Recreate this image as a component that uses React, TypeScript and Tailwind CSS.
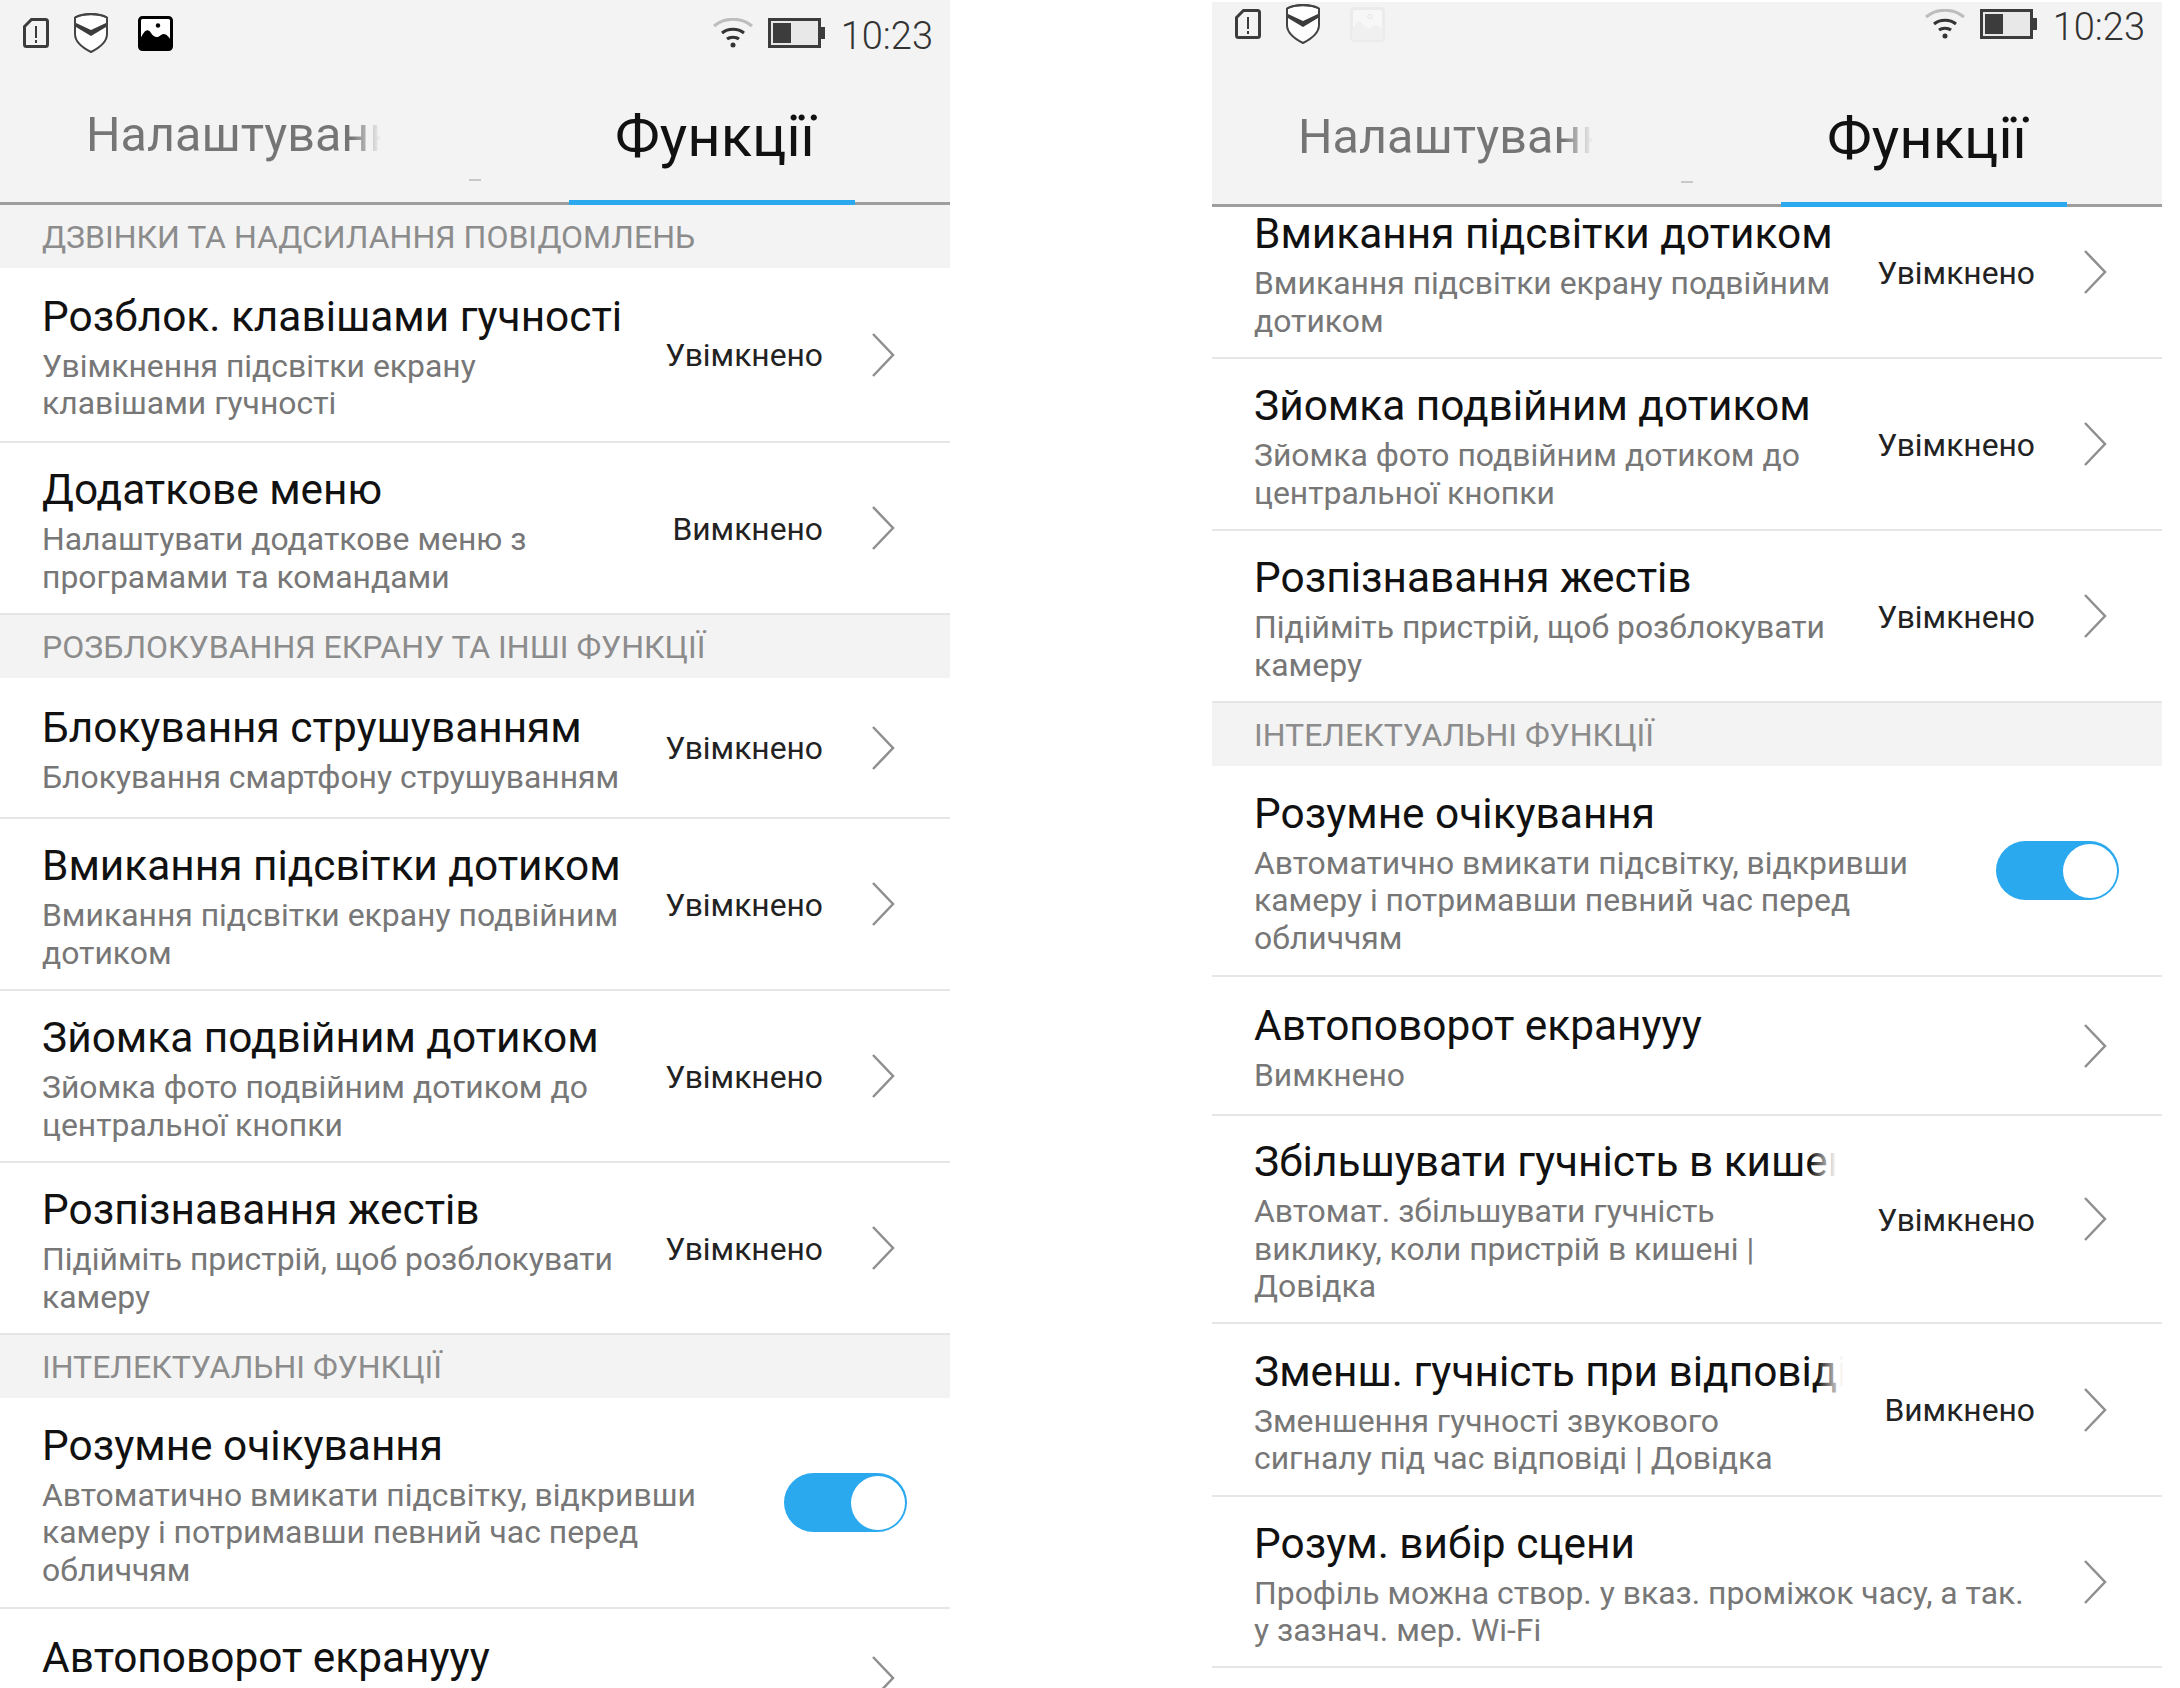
const FONT = "font-['Roboto',sans-serif]";

type Row = { title: string; sub: string[]; value?: string; toggle?: boolean; fade?: boolean; h: string };

function Shield() {
  return (
    <svg width="36" height="42" viewBox="0 0 36 42" fill="none">
      <path d="M18 2C24 2 30 3.2 34 5.5V22C34 30 26 36 18 40C10 36 2 30 2 22V5.5C6 3.2 12 2 18 2Z" fill="#fff" stroke="#444" strokeWidth="2" />
      <path d="M2 4.5C6 2.2 12 1 18 1C24 1 30 2.2 34 4.5V6.5C30 4.2 24 3.2 18 3.2C12 3.2 6 4.2 2 6.5Z" fill="#444" />
      <path d="M3 11L18 18L33 11V15L18 24L3 15Z" fill="#3c3c3c" />
    </svg>
  );
}

function Alert() {
  return (
    <svg width="26" height="30" viewBox="0 0 26 30" fill="none">
      <path d="M8.5 1.5H22.5C23.6 1.5 24.5 2.4 24.5 3.5V26.5C24.5 27.6 23.6 28.5 22.5 28.5H3.5C2.4 28.5 1.5 27.6 1.5 26.5V8.5Z" stroke="#3c3c3c" strokeWidth="3" />
      <path d="M13 8V20M13 22V25" stroke="#3c3c3c" strokeWidth="2" />
    </svg>
  );
}

function Picture({ faded }: { faded?: boolean }) {
  const line = faded ? '#ebebeb' : '#000';
  const land = faded ? '#f0f0f0' : '#000';
  return (
    <svg width="35" height="35" viewBox="0 0 35 35" fill="none">
      <rect x="1.5" y="1.5" width="32" height="32" rx="3" fill={faded ? '#f7f7f7' : '#fff'} stroke={line} strokeWidth="3" />
      <path d="M2 24C6 14 10 12 13 17C16 22 20 22 23 19C27 16 30 20 33 24V33H2Z" fill={land} />
      <circle cx="20" cy="9.5" r="2.2" fill={faded ? 'none' : '#000'} stroke={faded ? '#e4e4e4' : 'none'} />
    </svg>
  );
}

function Wifi() {
  return (
    <svg width="40" height="30" viewBox="0 0 40 30" fill="none">
      <path d="M1 8C12 -1 28 -1 39 8" stroke="#bdbdbd" strokeWidth="3" />
      <path d="M9 15C15 10 25 10 31 15" stroke="#333" strokeWidth="3" />
      <path d="M14 21C17 18.5 23 18.5 26 21" stroke="#333" strokeWidth="3" />
      <circle cx="20" cy="27" r="2.5" fill="#333" />
    </svg>
  );
}

function Battery() {
  return (
    <svg width="57" height="30" viewBox="0 0 57 30" fill="none">
      <rect x="1.5" y="1.5" width="50" height="27" stroke="#3c3c3c" strokeWidth="3" fill="#e8e8e8" />
      <rect x="5" y="5" width="18" height="20" fill="#3c3c3c" />
      <rect x="53" y="9" width="4" height="12" fill="#3c3c3c" />
    </svg>
  );
}

function Chevron() {
  return (
    <svg width="24" height="46" viewBox="0 0 24 46" fill="none">
      <path d="M2 2L22 23L2 44" stroke="#8f8f8f" strokeWidth="2.5" />
    </svg>
  );
}

function Toggle() {
  return (
    <div className="flex h-[59px] w-[123px] items-center justify-end rounded-full bg-[#2ba9ee] pr-[2px]">
      <div className="h-[54px] w-[54px] rounded-full bg-white" />
    </div>
  );
}

function Section({ label }: { label: string }) {
  return (
    <div className="flex h-[63px] shrink-0 items-center bg-[#f3f3f3] pl-[42px] text-[32px] text-[#8c8c8c]">
      {label}
    </div>
  );
}

function SettingRow({ row }: { row: Row }) {
  return (
    <div className={`flex shrink-0 items-center border-b-2 border-[#e6e6e6] bg-white pl-[42px] ${row.h}`}>
      <div className="relative min-w-0 flex-1 overflow-hidden pt-[4px]">
        <div className="mb-[5px] whitespace-nowrap text-[42.4px] leading-[52px] text-[#111]">{row.title}</div>
        {row.fade && <div className="absolute right-0 top-0 h-[56px] w-[26px] bg-gradient-to-r from-transparent to-white" />}
        {row.sub.map((s) => (
          <div key={s} className="whitespace-nowrap text-[31.9px] leading-[37.5px] text-[#777]">{s}</div>
        ))}
      </div>
      {row.toggle ? (
        <div className="ml-[41px] mr-[43px] shrink-0"><Toggle /></div>
      ) : (
        <div className="ml-[41px] flex shrink-0 items-center pr-[55px]">
          {row.value && <span className="mr-[48px] whitespace-nowrap pt-[3px] text-[31.8px] text-[#222]">{row.value}</span>}
          <Chevron />
        </div>
      )}
    </div>
  );
}

function Header({ faded, top }: { faded?: boolean; top: string }) {
  return (
    <div className="relative z-10 h-[205px] shrink-0 border-b-[3px] border-[#9e9e9e] bg-[#f3f3f3]">
      <div className={`flex items-center pl-[23px] pr-[17px] ${top}`}>
        <Alert />
        <div className="ml-[24px]"><Shield /></div>
        <div className="ml-[29px]"><Picture faded={faded} /></div>
        <div className="flex-1" />
        <Wifi />
        <div className="ml-[15px]"><Battery /></div>
        <span className="ml-[16px] pt-[6px] text-[38px] font-light text-[#333]">10:23</span>
      </div>
      <div className="relative flex h-[136px]">
        <div className="flex w-[569px] items-center pl-[86px] pt-[3px]">
          <span className="w-[295px] overflow-hidden whitespace-nowrap bg-gradient-to-r from-[#757575] from-[90%] to-transparent bg-clip-text text-[48.5px] text-transparent">
            Налаштування
          </span>
        </div>
        <div className="absolute left-[469px] top-[113px] h-[2px] w-[12px] bg-[#c8c8c8]" />
        <div className="relative flex w-[286px] items-center justify-center pl-[6px] pt-[4px] text-[58px] text-[#111]">
          Функції
          <div className="absolute inset-x-0 -bottom-[3px] h-[5px] bg-[#2ba9ee]" />
        </div>
      </div>
    </div>
  );
}

const LEFT_A: Row[] = [
  { title: 'Розблок. клавішами гучності', sub: ['Увімкнення підсвітки екрану', 'клавішами гучності'], value: 'Увімкнено', h: 'h-[175px]' },
  { title: 'Додаткове меню', sub: ['Налаштувати додаткове меню з', 'програмами та командами'], value: 'Вимкнено', h: 'h-[172px]' },
];
const SHAKE: Row = { title: 'Блокування струшуванням', sub: ['Блокування смартфону струшуванням'], value: 'Увімкнено', h: 'h-[141px]' };
const SHARED: Row[] = [
  { title: 'Вмикання підсвітки дотиком', sub: ['Вмикання підсвітки екрану подвійним', 'дотиком'], value: 'Увімкнено', h: 'h-[172px]' },
  { title: 'Зйомка подвійним дотиком', sub: ['Зйомка фото подвійним дотиком до', 'центральної кнопки'], value: 'Увімкнено', h: 'h-[172px]' },
  { title: 'Розпізнавання жестів', sub: ['Підійміть пристрій, щоб розблокувати', 'камеру'], value: 'Увімкнено', h: 'h-[172px]' },
];
const SMART: Row = { title: 'Розумне очікування', sub: ['Автоматично вмикати підсвітку, відкривши', 'камеру і потримавши певний час перед', 'обличчям'], toggle: true, h: 'h-[211px]' };
const AUTOROTATE: Row = { title: 'Автоповорот екрануyy', sub: ['Вимкнено'], h: 'h-[139px]' };
const RIGHT_B: Row[] = [
  SMART,
  AUTOROTATE,
  { title: 'Збільшувати гучність в кишені', sub: ['Автомат. збільшувати гучність', 'виклику, коли пристрій в кишені |', 'Довідка'], value: 'Увімкнено', fade: true, h: 'h-[208px]' },
  { title: 'Зменш. гучність при відповіді', sub: ['Зменшення гучності звукового', 'сигналу під час відповіді | Довідка'], value: 'Вимкнено', fade: true, h: 'h-[173px]' },
  { title: 'Розум. вибір сцени', sub: ['Профіль можна створ. у вказ. проміжок часу, а так.', 'у зазнач. мер. Wi-Fi'], h: 'h-[171px]' },
];

export default function App() {
  return (
    <div className={`flex h-[1688px] w-[2180px] overflow-hidden bg-white ${FONT}`}>
      <div className="flex w-[950px] flex-col overflow-hidden">
        <Header top="h-[66px]" />
        <Section label="ДЗВІНКИ ТА НАДСИЛАННЯ ПОВІДОМЛЕНЬ" />
        {LEFT_A.map((r) => <SettingRow key={r.title} row={r} />)}
        <Section label="РОЗБЛОКУВАННЯ ЕКРАНУ ТА ІНШІ ФУНКЦІЇ" />
        <SettingRow row={SHAKE} />
        {SHARED.map((r) => <SettingRow key={r.title} row={r} />)}
        <Section label="ІНТЕЛЕКТУАЛЬНІ ФУНКЦІЇ" />
        <SettingRow row={SMART} />
        <SettingRow row={AUTOROTATE} />
      </div>
      <div className="ml-[262px] flex h-[1688px] w-[950px] flex-col overflow-hidden pt-[2px]">
        <Header top="mb-[22px] h-[44px]" faded />
        <div className="-mt-[20px]">
          {SHARED.map((r) => <SettingRow key={r.title} row={r} />)}
          <Section label="ІНТЕЛЕКТУАЛЬНІ ФУНКЦІЇ" />
          {RIGHT_B.map((r) => <SettingRow key={r.title} row={r} />)}
        </div>
      </div>
    </div>
  );
}
